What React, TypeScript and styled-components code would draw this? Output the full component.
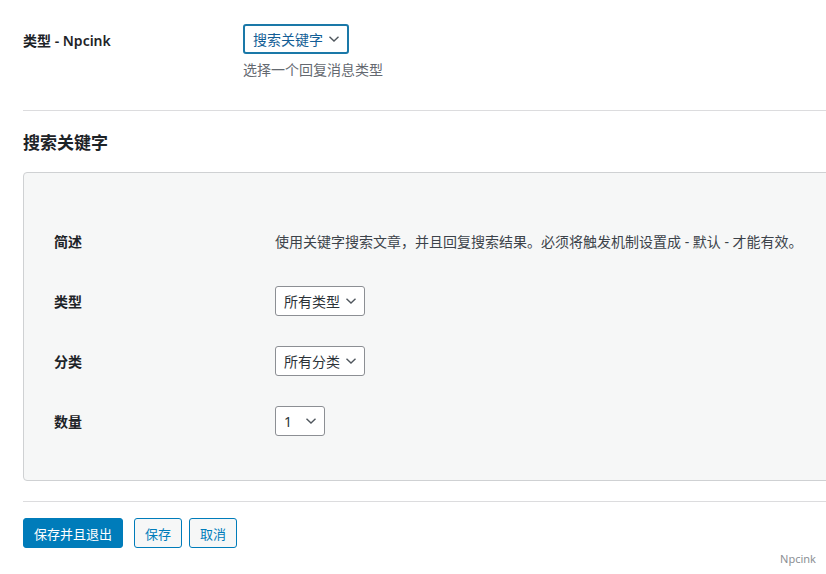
import React from "react";
import styled, { createGlobalStyle } from "styled-components";

const Global = createGlobalStyle`
  html, body { margin: 0; padding: 0; overflow: hidden; background: #fff; }
  body {
    font-family: "Noto Sans", "Noto Sans CJK SC", sans-serif;
    color: #3c434a;
    font-size: 13px;
  }
`;

const Page = styled.div`
  width: 826px;
  height: 574px;
  position: relative;
  overflow: hidden;
`;

const Content = styled.div`
  padding-left: 23px;
  width: 860px;
  box-sizing: border-box;
`;

const TopRow = styled.div`
  display: grid;
  grid-template-columns: 220px 1fr;
  padding-top: 24px;
  padding-bottom: 31px;
  border-bottom: 1px solid #dcdcde;
`;

const Label = styled.div`
  font-size: 14px;
  font-weight: 600;
  color: #1d2327;
  height: 30px;
  display: flex;
  align-items: center;
  padding-top: 2px;
  box-sizing: border-box;
`;

const Field = styled.div`
  display: flex;
  flex-direction: column;
  align-items: flex-start;
`;

const Desc = styled.div`
  color: #646970;
  font-size: 14px;
  margin-top: 7px;
  line-height: 18px;
`;

const SelectBox = styled.div<{ $focus?: boolean; $w: number }>`
  box-sizing: border-box;
  width: ${(p) => p.$w}px;
  height: 30px;
  display: flex;
  align-items: center;
  justify-content: space-between;
  padding: 0 7px 0 8px;
  border: ${(p) => (p.$focus ? "2px solid #1a78a8" : "1px solid #8c8f94")};
  border-radius: 3px;
  background: #fff;
  font-size: 14px;
  color: ${(p) => (p.$focus ? "#135e96" : "#2c3338")};
  white-space: nowrap;
  svg { flex: none; }
`;

const Chevron = () => (
  <svg width="12" height="8" viewBox="0 0 12 8">
    <path d="M1.5 1.8 L6 6 L10.5 1.8" fill="none" stroke="#50575e" strokeWidth="1.4" />
  </svg>
);

const Heading = styled.h2`
  margin: 0;
  padding-top: 22px;
  height: 40px;
  box-sizing: border-box;
  font-size: 17px;
  font-weight: 600;
  color: #1d2327;
  line-height: 20px;
`;

const Panel = styled.div`
  margin-top: 21px;
  background: #f6f7f7;
  border: 1px solid #cfd1d3;
  border-radius: 4px;
  padding: 38px 30px 29px 30px;
`;

const Row = styled.div`
  display: grid;
  grid-template-columns: 221px 1fr;
  height: 60px;
  align-items: center;
`;

const RowLabel = styled.div`
  font-size: 14px;
  font-weight: 600;
  color: #1d2327;
`;

const RowValue = styled.div`
  font-size: 14px;
  color: #3c434a;
  white-space: nowrap;
`;

const Footer = styled.div`
  margin-top: 20px;
  border-top: 1px solid #dcdcde;
  padding-top: 16px;
  display: flex;
`;

const Button = styled.button<{ $primary?: boolean; $ml?: number }>`
  box-sizing: border-box;
  height: 30px;
  padding: 0 10px;
  margin-left: ${(p) => p.$ml ?? 0}px;
  font-family: inherit;
  font-size: 13px;
  border-radius: 3px;
  border: 1px solid #007cba;
  background: ${(p) => (p.$primary ? "#007cba" : "#f6f7f7")};
  color: ${(p) => (p.$primary ? "#fff" : "#007cba")};
  cursor: pointer;
`;

const Credit = styled.div`
  position: absolute;
  right: 10px;
  bottom: 8px;
  font-size: 11px;
  color: #8c8f94;
`;

export default function App() {
  return (
    <Page>
      <Global />
      <Content>
        <TopRow>
          <Label>类型 - Npcink</Label>
          <Field>
            <SelectBox $focus $w={106}>
              <span>搜索关键字</span>
              <Chevron />
            </SelectBox>
            <Desc>选择一个回复消息类型</Desc>
          </Field>
        </TopRow>
        <Heading>搜索关键字</Heading>
        <Panel>
          <Row>
            <RowLabel>简述</RowLabel>
            <RowValue>使用关键字搜索文章，并且回复搜索结果。必须将触发机制设置成 - 默认 - 才能有效。</RowValue>
          </Row>
          <Row>
            <RowLabel>类型</RowLabel>
            <SelectBox $w={90}>
              <span>所有类型</span>
              <Chevron />
            </SelectBox>
          </Row>
          <Row>
            <RowLabel>分类</RowLabel>
            <SelectBox $w={90}>
              <span>所有分类</span>
              <Chevron />
            </SelectBox>
          </Row>
          <Row>
            <RowLabel>数量</RowLabel>
            <SelectBox $w={50}>
              <span>1</span>
              <Chevron />
            </SelectBox>
          </Row>
        </Panel>
        <Footer>
          <Button $primary>保存并且退出</Button>
          <Button $ml={11}>保存</Button>
          <Button $ml={7}>取消</Button>
        </Footer>
      </Content>
      <Credit>Npcink</Credit>
    </Page>
  );
}
